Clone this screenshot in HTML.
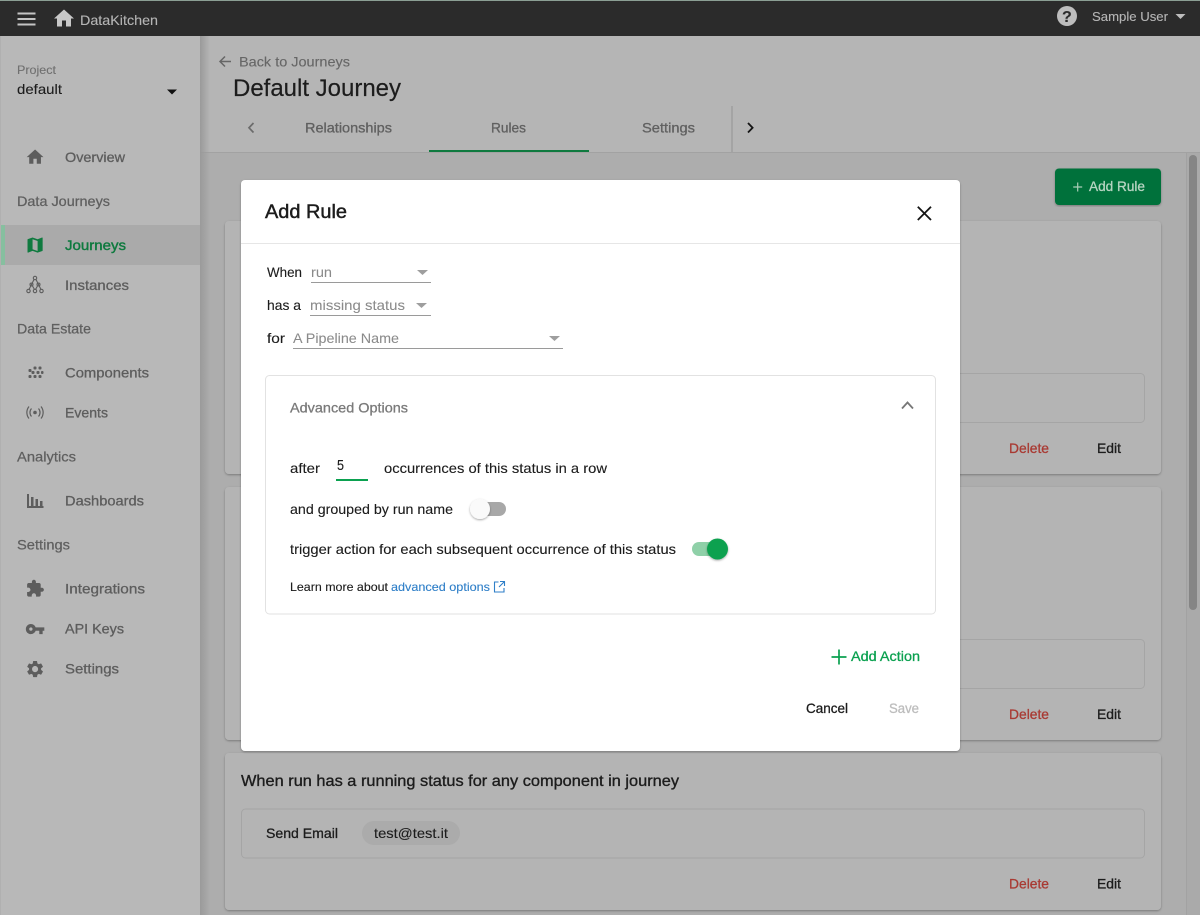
<!DOCTYPE html>
<html lang="en"><head><meta charset="utf-8"><title>Add Rule</title>
<style>
html,body{margin:0;padding:0;width:1200px;height:915px;overflow:hidden;background:#adadad}
svg{display:block;position:absolute;left:0;top:0}
text{font-family:"Liberation Sans",sans-serif;font-size:14px;color:#1c1c1c;fill:currentColor;stroke:currentColor;stroke-width:.12px}
.nav{color:#5d5d5d;stroke-width:.3px}
.sec{color:#5f5f5f;stroke-width:.25px}
.gr{color:#8a8a8a;stroke-width:.05px}
.del{color:#a93a33;stroke-width:.3px}
.m{stroke-width:.3px}
</style></head><body>
<svg width="1200" height="915" viewBox="0 0 1200 915" xmlns="http://www.w3.org/2000/svg">
<defs>
<linearGradient id="sh" x1="0" x2="1" y1="0" y2="0"><stop offset="0" stop-color="#9a9a9a"/><stop offset="1" stop-color="#9a9a9a" stop-opacity="0"/></linearGradient>
<filter id="ds" x="-5%" y="-5%" width="110%" height="110%"><feDropShadow dx="0" dy="1" stdDeviation="1" flood-color="#000" flood-opacity=".3"/></filter>
<filter id="ts" x="-50%" y="-50%" width="200%" height="200%"><feDropShadow dx="0" dy="1" stdDeviation="1" flood-color="#000" flood-opacity=".35"/></filter>
</defs>

<!-- main -->
<rect x="200" y="36" width="1000" height="879" fill="#adadad"/>
<rect x="200" y="36" width="1000" height="116" fill="#b5b5b5"/>
<rect x="200" y="152" width="1000" height="1" fill="#a2a2a2"/>
<rect x="200" y="36" width="10" height="879" fill="url(#sh)"/>
<text x="239" y="66.500" textLength="111" lengthAdjust="spacingAndGlyphs" style="color:#666">Back to Journeys</text>
<path d="M231 61.500H220M225 56.500L220 61.500L225 66.500" fill="none" stroke="#666" stroke-width="1.500"/>
<text x="233" y="96" style="font-size:24px;stroke-width:.2px" textLength="168" lengthAdjust="spacingAndGlyphs">Default Journey</text>
<path d="M253.500 123L249 127.800L253.500 132.500" fill="none" stroke="#6b6b6b" stroke-width="1.700"/>
<text x="305" y="132.500" class="m" textLength="87" lengthAdjust="spacingAndGlyphs" style="color:#606060">Relationships</text>
<text x="491" y="132.500" class="m" textLength="35" lengthAdjust="spacingAndGlyphs" style="color:#606060">Rules</text>
<text x="642" y="132.500" class="m" textLength="53" lengthAdjust="spacingAndGlyphs" style="color:#606060">Settings</text>
<rect x="429" y="150" width="160" height="2" fill="#0f7a3f"/>
<rect x="731" y="106" width="2" height="46" fill="#a4a4a4"/>
<path d="M748 123L752.600 127.800L748 132.500" fill="none" stroke="#151515" stroke-width="1.800"/>

<!-- scrollbar -->
<rect x="1186" y="153" width="1" height="762" fill="#a2a2a2"/>
<rect x="1187" y="153" width="13" height="762" fill="#aaa"/>
<rect x="1189" y="155" width="8" height="455" rx="4" fill="#858585"/>

<!-- Add rule button -->
<rect x="1055" y="168.500" width="106" height="36.500" rx="4" fill="#05713a" filter="url(#ds)"/>
<path d="M1077.700 182.500v9M1073.200 187h9" stroke="#a9cdb6" stroke-width="1.200"/>
<text x="1089" y="191" class="m" textLength="56" lengthAdjust="spacingAndGlyphs" style="color:#b7d5c2">Add Rule</text>

<!-- cards -->
<g fill="#b4b4b4">
<rect x="225" y="221" width="936" height="253" rx="4" filter="url(#ds)"/>
<rect x="225" y="487" width="936" height="253" rx="4" filter="url(#ds)"/>
<rect x="225" y="753" width="936" height="157" rx="4" filter="url(#ds)"/>
</g>
<g fill="none" stroke="#a5a5a5">
<rect x="241.500" y="373.500" width="903" height="49" rx="4"/>
<rect x="241.500" y="639.500" width="903" height="49" rx="4"/>
<rect x="241.500" y="809" width="903" height="49" rx="4"/>
</g>
<text class="del" x="1009" y="453" textLength="40" lengthAdjust="spacingAndGlyphs">Delete</text>
<text class="m" x="1097" y="453" textLength="24" lengthAdjust="spacingAndGlyphs">Edit</text>
<text class="del" x="1009" y="719" textLength="40" lengthAdjust="spacingAndGlyphs">Delete</text>
<text class="m" x="1097" y="719" textLength="24" lengthAdjust="spacingAndGlyphs">Edit</text>
<text class="del" x="1009" y="888.500" textLength="40" lengthAdjust="spacingAndGlyphs">Delete</text>
<text class="m" x="1097" y="888.500" textLength="24" lengthAdjust="spacingAndGlyphs">Edit</text>
<text x="241" y="786" style="font-size:16px;stroke-width:.35px" textLength="438" lengthAdjust="spacingAndGlyphs">When run has a running status for any component in journey</text>
<text class="m" x="266" y="838" textLength="72" lengthAdjust="spacingAndGlyphs">Send Email</text>
<rect x="362" y="821" width="98" height="24" rx="12" fill="#ababab"/>
<text x="374" y="838" textLength="74" lengthAdjust="spacingAndGlyphs">test@test.it</text>

<!-- sidebar -->
<rect x="0" y="36" width="200" height="879" fill="#b8b8b8"/>
<rect x="0" y="36" width="1" height="879" fill="#b0b0b0"/>
<text x="17" y="74" style="font-size:12px;color:#707070" textLength="39" lengthAdjust="spacingAndGlyphs">Project</text>
<text x="17" y="94" textLength="45" lengthAdjust="spacingAndGlyphs">default</text>
<path d="M167 89.500h10l-5 5z" fill="#111"/>
<rect x="1" y="225" width="199" height="40" fill="#aaa"/>
<rect x="1" y="225" width="4" height="40" fill="#86bf9f"/>

<text class="nav" x="65" y="162" textLength="60" lengthAdjust="spacingAndGlyphs">Overview</text>
<text class="sec" x="17" y="206" textLength="93" lengthAdjust="spacingAndGlyphs">Data Journeys</text>
<text class="m" x="65" y="250" textLength="61" lengthAdjust="spacingAndGlyphs" style="color:#0f7a3f;stroke-width:.4px">Journeys</text>
<text class="nav" x="65" y="290" textLength="64" lengthAdjust="spacingAndGlyphs">Instances</text>
<text class="sec" x="17" y="333.500" textLength="74" lengthAdjust="spacingAndGlyphs">Data Estate</text>
<text class="nav" x="65" y="377.500" textLength="84" lengthAdjust="spacingAndGlyphs">Components</text>
<text class="nav" x="65" y="417.500" textLength="43" lengthAdjust="spacingAndGlyphs">Events</text>
<text class="sec" x="17" y="461.500" textLength="59" lengthAdjust="spacingAndGlyphs">Analytics</text>
<text class="nav" x="65" y="505.500" textLength="79" lengthAdjust="spacingAndGlyphs">Dashboards</text>
<text class="sec" x="17" y="549.500" textLength="53" lengthAdjust="spacingAndGlyphs">Settings</text>
<text class="nav" x="65" y="593.500" textLength="80" lengthAdjust="spacingAndGlyphs">Integrations</text>
<text class="nav" x="65" y="633.500" textLength="59" lengthAdjust="spacingAndGlyphs">API Keys</text>
<text class="nav" x="65" y="673.500" textLength="54" lengthAdjust="spacingAndGlyphs">Settings</text>

<!-- sidebar icons -->
<path transform="translate(25 147) scale(.84)" d="M10 20v-6h4v6h5v-8h3L12 3 2 12h3v8z" fill="#5d5d5d"/>
<path transform="translate(25 235) scale(.84)" d="M20.500 3l-.16.03L15 5.100 9 3 3.360 4.900c-.21.07-.36.25-.36.48V20.500c0 .28.22.5.5.5l.16-.03L9 18.900l6 2.100 5.640-1.900c.21-.07.36-.25.36-.48V3.500c0-.28-.22-.5-.5-.5zM15 19l-6-2.110V5l6 2.110V19z" fill="#0f7a3f"/>
<g fill="none" stroke="#5d5d5d" stroke-width="1.100">
<circle cx="35" cy="278" r="1.700"/><circle cx="31.500" cy="284.500" r="1.500"/><circle cx="38.500" cy="284.500" r="1.500"/>
<circle cx="28.500" cy="291" r="1.700"/><circle cx="35" cy="291" r="1.700"/><circle cx="41.500" cy="291" r="1.700"/>
<path d="M34 279.500L29 289.500M36 279.500L41 289.500M32.500 286L34.500 289.500M37.500 286L35.500 289.500"/>
</g>
<g fill="#5d5d5d">
<rect x="33.500" y="366.500" width="3" height="3" rx="1"/><rect x="28.500" y="369" width="3" height="3" rx="1"/><rect x="38.500" y="366.500" width="3" height="3" rx="1"/>
<rect x="31.500" y="371" width="3" height="3" rx="1"/><rect x="36.500" y="371" width="3" height="3" rx="1"/><rect x="41" y="371" width="2.500" height="3" rx="1"/>
<rect x="28.500" y="375" width="3" height="3" rx="1"/><rect x="33.500" y="375" width="3" height="3" rx="1"/><rect x="38.500" y="375" width="3" height="3" rx="1"/>
<circle cx="35" cy="412.500" r="1.800"/>
<rect x="27" y="494" width="2" height="14"/><rect x="27" y="506" width="16.500" height="2"/>
<rect x="31" y="497" width="2.500" height="10"/><rect x="35.500" y="499" width="2.500" height="8"/><rect x="40" y="501" width="2.500" height="6"/>
</g>
<path d="M31.500 408.500a6 6 0 0 0 0 8M38.500 408.500a6 6 0 0 1 0 8M29 406.500a9.500 9.500 0 0 0 0 12M41 406.500a9.500 9.500 0 0 1 0 12" fill="none" stroke="#5d5d5d" stroke-width="1.200"/>
<path transform="translate(25.500 579) scale(.8)" d="M20.500 11H19V7c0-1.100-.9-2-2-2h-4V3.500C13 2.120 11.880 1 10.500 1S8 2.120 8 3.500V5H4c-1.100 0-1.990.9-1.990 2v3.800H3.500c1.490 0 2.700 1.210 2.700 2.700s-1.210 2.700-2.700 2.700H2V20c0 1.100.9 2 2 2h3.800v-1.500c0-1.490 1.210-2.700 2.700-2.700 1.490 0 2.700 1.210 2.700 2.700V22H17c1.100 0 2-.9 2-2v-4h1.500c1.380 0 2.500-1.120 2.500-2.500S21.880 11 20.500 11z" fill="#5d5d5d"/>
<path transform="translate(25 619) scale(.84)" d="M12.650 10C11.830 7.670 9.610 6 7 6c-3.310 0-6 2.690-6 6s2.690 6 6 6c2.610 0 4.830-1.670 5.650-4H17v4h4v-4h2v-4H12.650zM7 14c-1.100 0-2-.9-2-2s.9-2 2-2 2 .9 2 2-.9 2-2 2z" fill="#5d5d5d"/>
<path transform="translate(25 659) scale(.84)" d="M19.140 12.940c.04-.3.06-.61.06-.94 0-.32-.02-.64-.07-.94l2.030-1.580c.18-.14.23-.41.12-.61l-1.920-3.320c-.12-.22-.37-.29-.59-.22l-2.390.96c-.5-.38-1.030-.7-1.620-.94l-.36-2.540c-.04-.24-.24-.41-.48-.41h-3.840c-.24 0-.43.17-.47.41l-.36 2.540c-.59.24-1.130.57-1.620.94l-2.390-.96c-.22-.08-.47 0-.59.22L2.740 8.870c-.12.21-.08.47.12.61l2.030 1.580c-.05.3-.09.63-.09.94s.02.64.07.94l-2.030 1.580c-.18.14-.23.41-.12.61l1.920 3.320c.12.22.37.29.59.22l2.390-.96c.5.38 1.030.7 1.620.94l.36 2.540c.05.24.24.41.48.41h3.840c.24 0 .44-.17.47-.41l.36-2.540c.59-.24 1.130-.56 1.620-.94l2.390.96c.22.08.47 0 .59-.22l1.920-3.320c.12-.22.07-.47-.12-.61l-2.010-1.580zM12 15.600c-1.980 0-3.600-1.620-3.600-3.600s1.620-3.600 3.600-3.600 3.600 1.620 3.600 3.600-1.620 3.600-3.600 3.600z" fill="#5d5d5d"/>

<!-- top bar -->
<rect x="0" y="0" width="1200" height="36" fill="#2b2b2b"/>
<rect x="0" y="0" width="1200" height="1" fill="#8b9f94"/>
<path d="M17.500 13.500h18M17.500 19h18M17.500 24.500h18" stroke="#c4c4c4" stroke-width="2"/>
<path transform="translate(52 6.500) scale(1)" d="M10 20v-6h4v6h5v-8h3L12 3 2 12h3v8z" fill="#c8c8c8"/>
<text x="80" y="25" textLength="78" lengthAdjust="spacingAndGlyphs" style="color:#b5b5b5">DataKitchen</text>
<circle cx="1067" cy="16" r="10" fill="#bdbdbd"/>
<text x="1062" y="22" style="font-size:16px;font-weight:bold;color:#2b2b2b">?</text>
<text x="1092" y="21" style="font-size:13px;color:#b5b5b5" textLength="76" lengthAdjust="spacingAndGlyphs">Sample User</text>
<path d="M1175.500 14h10l-5 5z" fill="#bdbdbd"/>

<!-- modal -->
<rect x="241" y="180" width="719" height="571" rx="4" fill="#fff" filter="url(#ds)"/>
<text x="265" y="218" style="font-size:19px;color:#1c1c1c;stroke-width:.45px" textLength="82" lengthAdjust="spacingAndGlyphs">Add Rule</text>
<rect x="241" y="243" width="719" height="1" fill="#e6e6e6"/>
<path d="M917.800 206.800L931 220M931 206.800L917.800 220" stroke="#151515" stroke-width="1.800" fill="none"/>

<text x="267" y="277" textLength="35" lengthAdjust="spacingAndGlyphs">When</text>
<text class="gr" x="311" y="277" textLength="21" lengthAdjust="spacingAndGlyphs">run</text>
<rect x="311" y="282" width="120" height="1" fill="#9a9a9a"/>
<path d="M417 270h11l-5.500 5z" fill="#9e9e9e"/>

<text x="267" y="310" textLength="34" lengthAdjust="spacingAndGlyphs">has a</text>
<text class="gr" x="310" y="310" textLength="95" lengthAdjust="spacingAndGlyphs">missing status</text>
<rect x="310" y="315" width="121" height="1" fill="#9a9a9a"/>
<path d="M416 303h11l-5.500 5z" fill="#9e9e9e"/>

<text x="267" y="343" textLength="18" lengthAdjust="spacingAndGlyphs">for</text>
<text class="gr" x="293" y="343" textLength="106" lengthAdjust="spacingAndGlyphs">A Pipeline Name</text>
<rect x="293" y="348" width="270" height="1" fill="#9a9a9a"/>
<path d="M549 336h11l-5.500 5z" fill="#9e9e9e"/>

<rect x="265.500" y="375.500" width="670" height="238.500" rx="4" fill="#fff" stroke="#e2e2e2"/>
<text x="290" y="412.500" class="m" textLength="118" lengthAdjust="spacingAndGlyphs" style="color:#7a7a7a">Advanced Options</text>
<path d="M902 408.500L907.500 402.500L913 408.500" fill="none" stroke="#777" stroke-width="1.800"/>

<text x="290" y="473" textLength="30" lengthAdjust="spacingAndGlyphs">after</text>
<text x="337" y="470" style="font-size:14.500px" textLength="7" lengthAdjust="spacingAndGlyphs">5</text>
<rect x="336" y="479" width="32" height="2" fill="#0ba150"/>
<text x="384" y="473" textLength="223" lengthAdjust="spacingAndGlyphs">occurrences of this status in a row</text>

<text x="290" y="514" textLength="163" lengthAdjust="spacingAndGlyphs">and grouped by run name</text>
<rect x="472" y="502" width="34" height="14" rx="7" fill="#a8a8a8"/>
<circle cx="480" cy="509" r="10" fill="#fafafa" filter="url(#ts)"/>

<text x="290" y="554" textLength="386" lengthAdjust="spacingAndGlyphs">trigger action for each subsequent occurrence of this status</text>
<rect x="692" y="542" width="34" height="14" rx="7" fill="#8fd0a8"/>
<circle cx="717.500" cy="549" r="10.500" fill="#0ba150" filter="url(#ts)"/>

<text x="290" y="591" style="font-size:12px" textLength="98" lengthAdjust="spacingAndGlyphs">Learn more about</text>
<text x="391" y="591" style="font-size:12px;color:#2f7fc8" textLength="99" lengthAdjust="spacingAndGlyphs">advanced options</text>
<path d="M498.500 582H494.500V592H504V588M500 581.500H504.500V586M504.500 581.500L499 587" fill="none" stroke="#2f7fc8" stroke-width="1.100"/>

<path d="M839 649.500v15M831.500 657h15" stroke="#0ba150" stroke-width="1.700"/>
<text x="851" y="661" class="m" textLength="69" lengthAdjust="spacingAndGlyphs" style="color:#0ba150">Add Action</text>
<text x="806" y="713" class="m" textLength="42" lengthAdjust="spacingAndGlyphs">Cancel</text>
<text x="889" y="713" class="m" textLength="30" lengthAdjust="spacingAndGlyphs" style="color:#bdbdbd">Save</text>
</svg>
</body></html>
